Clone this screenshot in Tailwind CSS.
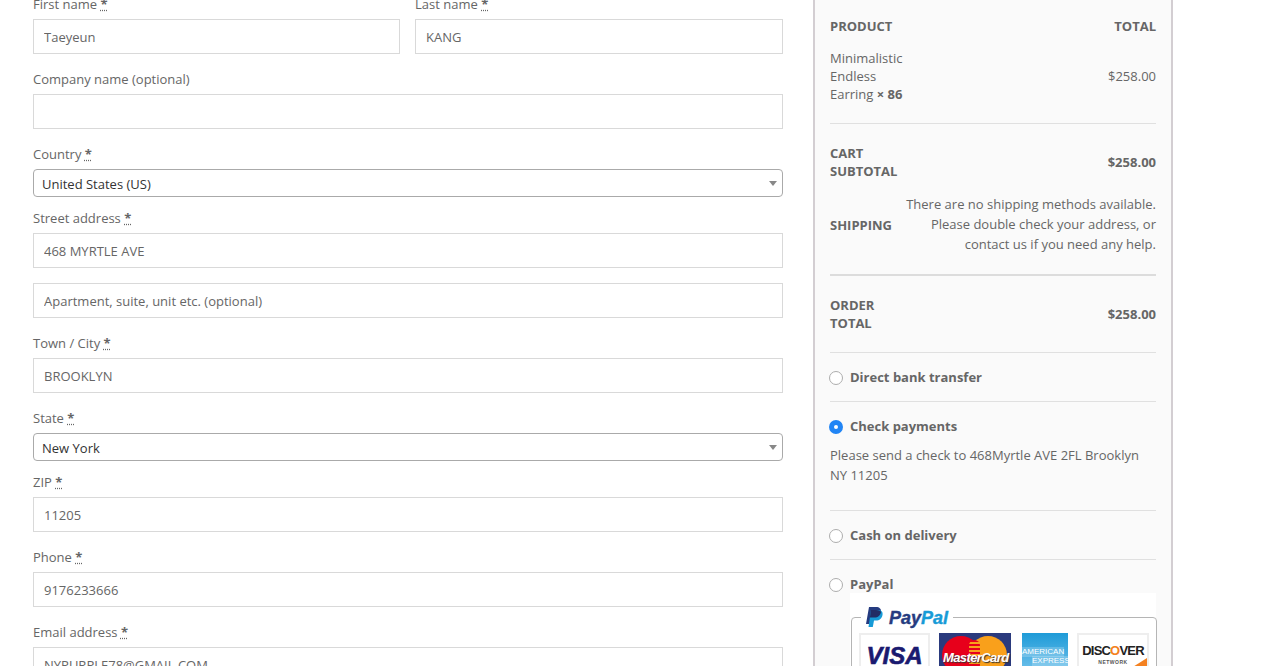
<!DOCTYPE html>
<html lang="en">

<head>
    <meta charset="UTF-8" />
    <meta name="viewport" content="width=device-width, initial-scale=1.0" />
    <title>Checkout</title>
    <script src="https://cdn.jsdelivr.net/npm/@tailwindcss/browser@4"></script>
</head>

<body class="bg-white font-['Open_Sans',sans-serif] text-[13px] text-[#666666]">
    <div class="flex h-[666px] overflow-hidden">

        <!-- billing form -->
        <form class="ml-[33px] mt-[-6px] w-[750px] shrink-0">
            <div class="flex gap-[15px] mb-[15px]">
                <div class="w-[367px]">
                    <label class="block h-[20px] leading-[20px] mb-[5px]">First name <abbr title="required" class="font-bold">*</abbr></label>
                    <input type="text" value="Taeyeun" class="block w-full h-[35px] px-[10px] border border-[#d9d9d9] text-[#666666]" />
                </div>
                <div class="flex-1">
                    <label class="block h-[20px] leading-[20px] mb-[5px]">Last name <abbr title="required" class="font-bold">*</abbr></label>
                    <input type="text" value="KANG" class="block w-full h-[35px] px-[10px] border border-[#d9d9d9] text-[#666666]" />
                </div>
            </div>

            <div class="mb-[15px]">
                <label class="block h-[20px] leading-[20px] mb-[5px]">Company name (optional)</label>
                <input type="text" class="block w-full h-[35px] px-[10px] border border-[#d9d9d9]" />
            </div>

            <div class="mb-[11px]">
                <label class="block h-[20px] leading-[20px] mb-[5px]">Country <abbr title="required" class="font-bold">*</abbr></label>
                <div class="relative">
                    <select class="block w-full h-[28px] pl-[8px] pr-[20px] pt-[3px] appearance-none rounded-[4px] border border-[#aaaaaa] bg-white text-[#333333]">
                        <option>United States (US)</option>
                    </select>
                    <span class="absolute right-[6px] top-[12px] w-0 h-0 border-x-[4px] border-x-transparent border-t-[5px] border-t-[#888888]"></span>
                </div>
            </div>

            <div class="mb-[15px]">
                <label class="block h-[20px] leading-[20px] mb-[5px]">Street address <abbr title="required" class="font-bold">*</abbr></label>
                <input type="text" value="468 MYRTLE AVE" class="block w-full h-[35px] px-[10px] border border-[#d9d9d9] text-[#666666]" />
            </div>

            <div class="mb-[15px]">
                <input type="text" placeholder="Apartment, suite, unit etc. (optional)" class="block w-full h-[35px] px-[10px] border border-[#d9d9d9] placeholder:text-[#666666]" />
            </div>

            <div class="mb-[15px]">
                <label class="block h-[20px] leading-[20px] mb-[5px]">Town / City <abbr title="required" class="font-bold">*</abbr></label>
                <input type="text" value="BROOKLYN" class="block w-full h-[35px] px-[10px] border border-[#d9d9d9] text-[#666666]" />
            </div>

            <div class="mb-[11px]">
                <label class="block h-[20px] leading-[20px] mb-[5px]">State <abbr title="required" class="font-bold">*</abbr></label>
                <div class="relative">
                    <select class="block w-full h-[28px] pl-[8px] pr-[20px] pt-[3px] appearance-none rounded-[4px] border border-[#aaaaaa] bg-white text-[#333333]">
                        <option>New York</option>
                    </select>
                    <span class="absolute right-[6px] top-[12px] w-0 h-0 border-x-[4px] border-x-transparent border-t-[5px] border-t-[#888888]"></span>
                </div>
            </div>

            <div class="mb-[15px]">
                <label class="block h-[20px] leading-[20px] mb-[5px]">ZIP <abbr title="required" class="font-bold">*</abbr></label>
                <input type="text" value="11205" class="block w-full h-[35px] px-[10px] border border-[#d9d9d9] text-[#666666]" />
            </div>

            <div class="mb-[15px]">
                <label class="block h-[20px] leading-[20px] mb-[5px]">Phone <abbr title="required" class="font-bold">*</abbr></label>
                <input type="text" value="9176233666" class="block w-full h-[35px] px-[10px] border border-[#d9d9d9] text-[#666666]" />
            </div>

            <div class="mb-[15px]">
                <label class="block h-[20px] leading-[20px] mb-[5px]">Email address <abbr title="required" class="font-bold">*</abbr></label>
                <input type="text" value="NYPURPLE78@GMAIL.COM" class="block w-full h-[35px] px-[10px] border border-[#d9d9d9] text-[#666666]" />
            </div>
        </form>

        <!-- order review -->
        <aside class="ml-[30px] w-[360px] h-[666px] shrink-0 border-x-2 border-[#d3ced2] bg-[#fafafa] px-[15px]">
            <div class="flex justify-between pt-[17px] leading-[18px] font-bold">
                <span>PRODUCT</span>
                <span>TOTAL</span>
            </div>

            <div class="flex justify-between items-center h-[89px] pb-[6px] border-b border-[#e0e0e0]">
                <span class="w-[80px] leading-[18px]">Minimalistic Endless Earring <b>× 86</b></span>
                <span class="mt-[2px]">$258.00</span>
            </div>

            <div class="flex justify-between items-center h-[70px] pt-[6px] font-bold">
                <span class="w-[80px] leading-[18px]">CART SUBTOTAL</span>
                <span class="mt-[2px]">$258.00</span>
            </div>

            <div class="flex justify-between items-center h-[60px]">
                <span class="font-bold mt-[3px]">SHIPPING</span>
                <span class="w-[255px] text-right leading-[20px]">There are no shipping methods available. Please double check your address, or contact us if you need any help.</span>
            </div>

            <div class="flex justify-between items-center h-[78px] mt-[20px] border-t-2 border-[#dcdcdc] font-bold">
                <span class="w-[80px] leading-[18px]">ORDER TOTAL</span>
                <span class="mt-[2px]">$258.00</span>
            </div>

            <ul class="font-bold">
                <li class="flex items-center gap-[7px] h-[49px] border-t border-[#e0e0e0]">
                    <input type="radio" name="payment" class="appearance-none -ml-[1px] mt-[2px] w-[14px] h-[14px] rounded-full border border-[#adadad] bg-white checked:border-[5px] checked:border-[#2185f5]" />
                    <span class="mt-[2px]">Direct bank transfer</span>
                </li>
                <li class="border-t border-[#e0e0e0] h-[109px]">
                    <div class="flex items-center gap-[7px] h-[49px]">
                        <input type="radio" name="payment" checked class="appearance-none -ml-[1px] w-[14px] h-[14px] rounded-full border border-[#adadad] bg-white checked:border-[5px] checked:border-[#2185f5]" />
                        <span>Check payments</span>
                    </div>
                    <p class="font-normal leading-[20px] mt-[-6px]">Please send a check to 468Myrtle AVE 2FL Brooklyn NY 11205</p>
                </li>
                <li class="flex items-center gap-[7px] h-[49px] border-t border-[#e0e0e0]">
                    <input type="radio" name="payment" class="appearance-none -ml-[1px] mt-[2px] w-[14px] h-[14px] rounded-full border border-[#adadad] bg-white checked:border-[5px] checked:border-[#2185f5]" />
                    <span class="mt-[2px]">Cash on delivery</span>
                </li>
                <li class="border-t border-[#e0e0e0]">
                    <div class="flex items-center gap-[7px] h-[49px]">
                        <input type="radio" name="payment" class="appearance-none -ml-[1px] w-[14px] h-[14px] rounded-full border border-[#adadad] bg-white checked:border-[5px] checked:border-[#2185f5]" />
                        <span>PayPal</span>
                    </div>
                    <div class="ml-[20px] mt-[-16px] bg-white pt-[14px] h-[90px]">
                        <fieldset class="ml-[1px] border border-[#b5b5b5] rounded-[4px] px-[7px] pb-[8px] h-[80px]">
                            <legend class="ml-[2px] px-[5px] flex items-center gap-[6px] h-[20px]">
                                <svg width="17" height="20" viewBox="0 0 17 20">
                                    <path d="M3 0h7c3.500 0 5.500 2 5 5-.6 3.500-3 5.500-6.500 5.500H6L4.800 17H0z" fill="#253b80" />
                                    <path d="M5 3h7c3.500 0 5 2 4.500 5-.6 3.500-3 5.500-6.500 5.500H8L6.800 20H2.500z" fill="#179bd7" />
                                    <path d="M5 3h5c3.500 0 5.300 1.500 5 2-.6 3.500-3 5.500-6.500 5.500H6L3.900 10.500z" fill="#222d65" />
                                </svg>
                                <span class="mt-[2px] font-['Liberation_Sans',sans-serif] italic font-bold text-[18px] leading-[20px] text-[#253b80] [-webkit-text-stroke:0.4px]">Pay<span class="text-[#179bd7]">Pal</span></span>
                            </legend>
                            <div class="flex mt-[6px]">
                                <div class="w-[71px] h-[46px] border-2 border-[#eeeeee] text-center font-['Liberation_Sans',sans-serif] italic font-bold text-[24px] leading-[24px] text-[#1a1a70] pt-[9px] [-webkit-text-stroke:0.6px]">VISA</div>
                                <div class="relative w-[72px] h-[46px] ml-[9px] bg-[#2a3a7d] overflow-hidden">
                                    <span class="absolute left-[3px] top-[3px] w-[38px] h-[38px] rounded-full bg-[#e7001b]"></span>
                                    <span class="absolute left-[30px] top-[3px] w-[38px] h-[38px] rounded-full bg-[#f9a01b]"></span>
                                    <span class="absolute left-[30px] top-[7px] w-[11px] h-[30px] rounded-full bg-[repeating-linear-gradient(#e7001b_0,#e7001b_2px,#f9a01b_2px,#f9a01b_4px)]"></span>
                                    <span class="absolute left-[4px] top-[16px] font-['Liberation_Sans',sans-serif] italic font-bold text-[13px] leading-[18px] tracking-[-0.6px] text-white [text-shadow:1px_1px_1px_#333333]">MasterCard</span>
                                </div>
                                <div class="w-[46px] h-[46px] ml-[11px] bg-[linear-gradient(#1e9bd8,#7fc8ee)] font-['Liberation_Sans',sans-serif] text-white text-[8px] leading-[10px] font-normal pt-[14px] overflow-hidden">
                                    <div class="w-[42px] bg-white/20 text-center">AMERICAN</div>
                                    <div class="w-[36px] mt-[-1px] ml-[10px] bg-white/20 text-center">EXPRESS</div>
                                </div>
                                <div class="relative w-[72px] h-[46px] ml-[9px] border-2 border-[#eeeeee] text-center overflow-hidden font-['Liberation_Sans',sans-serif] pt-[8px]">
                                    <div class="text-[#222222] font-bold text-[13px] leading-[16px] tracking-[-0.8px]">DISC<span class="text-[#f48120]">O</span>VER</div>
                                    <div class="text-[#555555] font-bold text-[5px] leading-[6px] tracking-[0.5px]">NETWORK</div>
                                    <span class="absolute right-0 bottom-0 w-0 h-0 border-l-[30px] border-l-transparent border-b-[19px] border-b-[#f48120]"></span>
                                </div>
                            </div>
                        </fieldset>
                    </div>
                </li>
            </ul>
        </aside>
    </div>
</body>

</html>
